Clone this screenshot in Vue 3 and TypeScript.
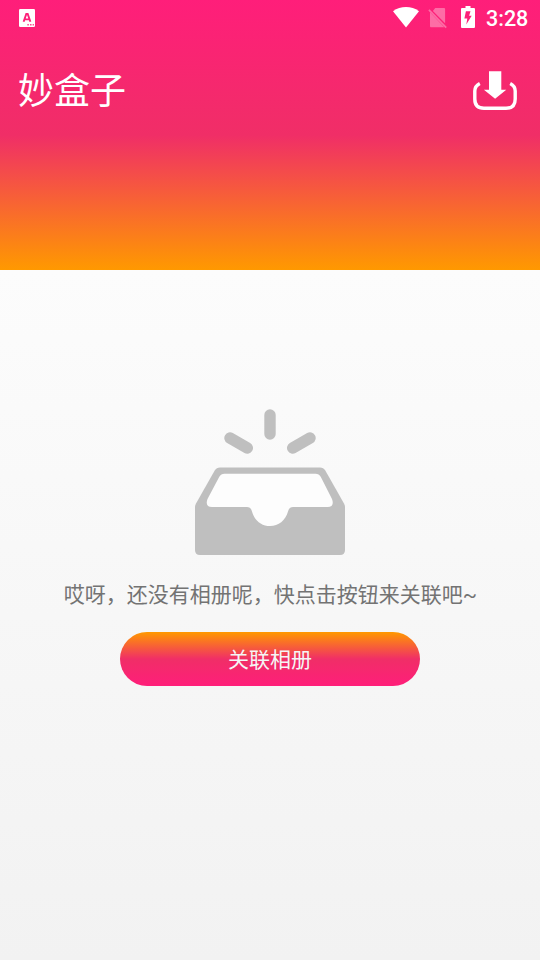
<script setup lang="ts">
const time: string = '3:28'
const title: string = '妙盒子'
const message: string = '哎呀，还没有相册呢，快点击按钮来关联吧'
const action: string = '关联相册'
</script>

<template>
  <div class="screen">
    <header class="header">
      <div class="status">
        <svg class="notice" width="16" height="18" viewBox="0 0 16 18">
          <rect width="16" height="18" rx="1.2" fill="#fff" />
          <path d="M4.6 12.8 7.3 5h1.4l2.7 7.800M5.700 10.400h4.600" fill="none" stroke="#fd2079" stroke-width="1.900" />
          <path d="M8.300 15h1.600v1.600H8.300zM11 15h1.600v1.600H11zM13.600 15h1.400v1.600h-1.400z" fill="#fd2079" opacity=".8" />
        </svg>
        <svg class="wifi" width="26" height="21" viewBox="0 0 26 21">
          <path d="M0 4.200C7.600-1.300 18.400-1.300 26 4.200L13 20.600z" fill="#fff" />
        </svg>
        <svg class="sim" width="20" height="22" viewBox="0 0 20 22">
          <g fill="#fff" opacity=".34">
            <path d="M7.200 1h8.600c.8 0 1.300.5 1.300 1.300v13.900L4.900 3.900zM2 5.300 16.300 20.300H3.400c-.9 0-1.400-.5-1.400-1.300z" />
            <path d="M1.500 2.200.3 3.400l17.300 17.900 1.200-1.200z" />
          </g>
        </svg>
        <svg class="battery" width="14" height="22" viewBox="0 0 14 22">
          <path d="M4.500 0h5v2h3.200c.8 0 1.300.5 1.300 1.300v17.400c0 .8-.5 1.300-1.300 1.300H1.300C.5 22 0 21.500 0 20.700V3.300C0 2.500.5 2 1.300 2h3.200z" fill="#fff" />
          <path d="M4.900 5.200h4.600L8.100 9.700h2.600L5.300 18.500l1-6H3.400z" fill="#fd2079" />
        </svg>
        <span class="time">{{ time }}</span>
      </div>
      <div class="toolbar">
        <h1 class="title">{{ title }}</h1>
        <button class="download" aria-label="导入">
          <svg width="44" height="40" viewBox="0 0 44 40">
            <path d="M6.800 12.400C3 14.300 1.800 16.600 1.800 20v8c0 6.200 3.200 9.300 9.200 9.300h22c6 0 9.200-3.100 9.200-9.300v-8c0-3.400-1.200-5.700-5-7.600" fill="none" stroke="#fff" stroke-width="3.400" />
            <path d="M16 .2h12.300v18.600h5L22.100 27.800 10.900 18.800H16z" fill="#fff" />
          </svg>
        </button>
      </div>
    </header>

    <main class="empty">
      <svg class="tray" width="150" height="146" viewBox="0 0 150 146">
        <path d="M75 6v19M35 29l17.300 10M115 29 97.700 39" fill="none" stroke="#bfbfbf" stroke-width="11.400" stroke-linecap="round" />
        <path
          fill="#bfbfbf"
          d="M25 58.500h100q3.500 0 5.300 3.100L149 94.500q1 1.800 1 3.500v43q0 5-5 5H5q-5 0-5-5V98q0-1.700 1-3.500L19.700 61.600Q21.500 58.500 25 58.500z"
        />
        <path
          fill="#fdfdfd"
          d="M29.500 64.800h91q3.500 0 5.200 3l11.300 22.200q2.800 8-4.500 8H98q-4 0-5 4.500C90.500 111.500 83.500 117 75 117s-15.500-5.500-18-14.500Q56 98 52 98H17q-7.300 0-4.500-8L24.300 67.800q1.700-3 5.200-3z"
        />
      </svg>
      <p class="message">{{ message }}<span class="tilde">~</span></p>
      <button class="action">{{ action }}</button>
    </main>
  </div>
</template>

<style>
body {
  margin: 0;
}
</style>

<style scoped>
.screen {
  display: flex;
  flex-direction: column;
  width: 540px;
  height: 960px;
  overflow: hidden;
  font-family: 'Noto Sans CJK SC', sans-serif;
}

.header {
  box-sizing: border-box;
  height: 270px;
  background: linear-gradient(#ff1e7a, #f02e67 50%, #ff9900);
}

.status {
  display: flex;
  align-items: flex-start;
  box-sizing: border-box;
  height: 36px;
  padding: 6px 12px 0 19px;
}

.notice {
  margin-top: 3px;
}

.wifi {
  margin-top: 1px;
  margin-left: auto;
}

.sim {
  margin-top: 1px;
  margin-left: 9.500px;
}

.battery {
  margin-left: 13px;
}

.time {
  width: 42px;
  margin-left: 11px;
  color: #fff;
  font: 500 21.500px/26px Roboto, sans-serif;
}

.toolbar {
  display: flex;
  align-items: center;
  justify-content: space-between;
  height: 104px;
  padding: 0 23px 0 18px;
}

.title {
  margin: 0;
  color: #fff;
  font-size: 36px;
  font-weight: 400;
  line-height: 52px;
}

.download {
  display: flex;
  margin-top: 5px;
  padding: 0;
  border: 0;
  background: none;
}

.empty {
  display: flex;
  flex: 1;
  flex-direction: column;
  align-items: center;
  padding-top: 139px;
  background: linear-gradient(#fcfcfc, #f2f2f2);
}

.message {
  margin: 23px 0 24px;
  padding-left: 1px;
  color: #737373;
  font-size: 21px;
  line-height: 30px;
  white-space: nowrap;
}

.tilde {
  font-family: Roboto, sans-serif;
  line-height: 0;
}

.action {
  width: 300px;
  height: 54px;
  padding: 0 0 2px;
  border: 0;
  border-radius: 27px;
  background: linear-gradient(#ff9900, #f02e67 50%, #ff1e7a);
  color: #f5f5f5;
  font-family: inherit;
  font-size: 21px;
  line-height: 52px;
}
</style>
